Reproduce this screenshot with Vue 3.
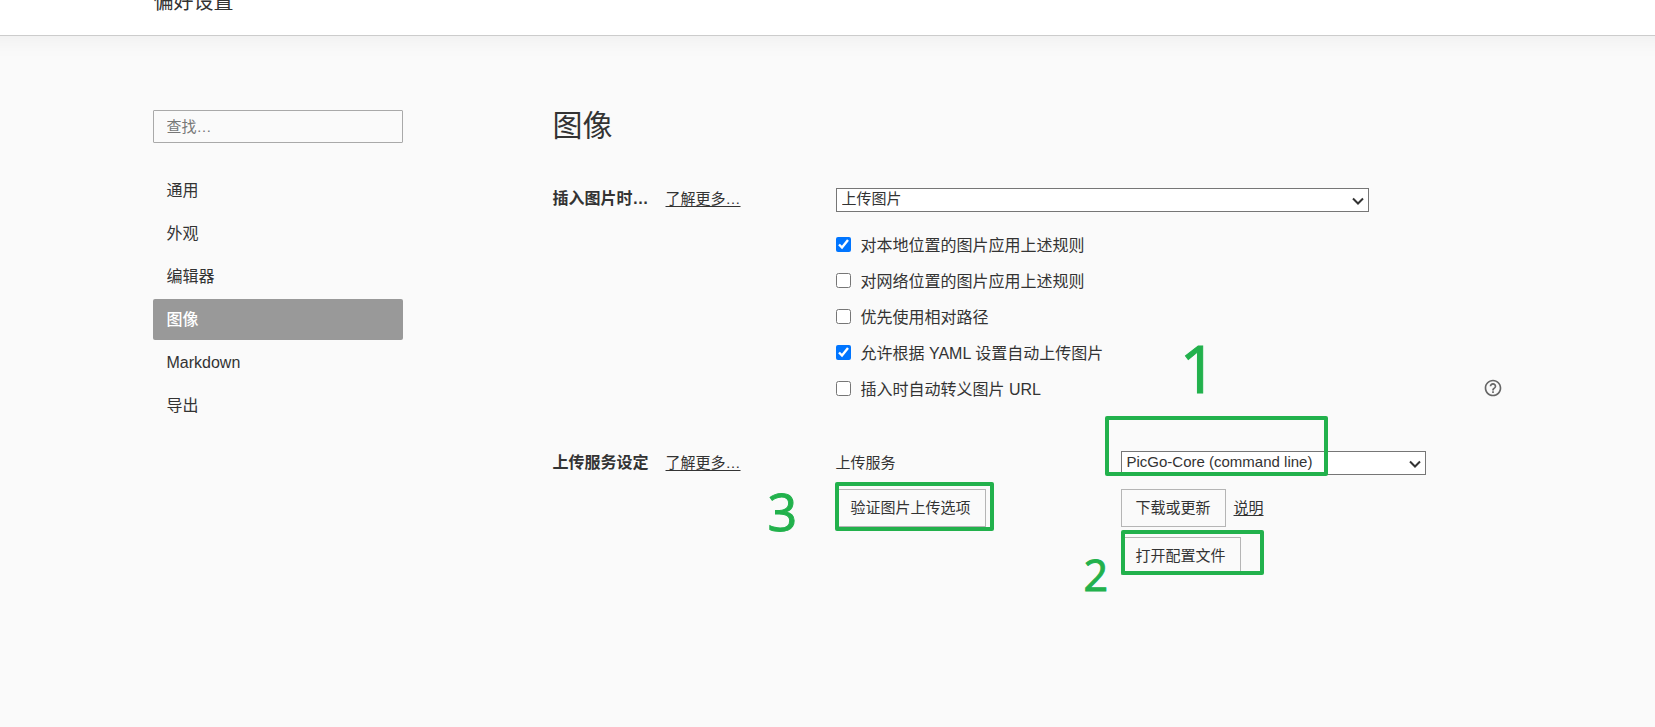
<script setup>
import { ref } from 'vue'

const query = ref('')
const navItems = ['通用', '外观', '编辑器', '图像', 'Markdown', '导出']
const active = ref('图像')
const insertAction = ref('upload')
const service = ref('picgo-core')
const rules = ref([
  { id: 'local', label: '对本地位置的图片应用上述规则', checked: true },
  { id: 'network', label: '对网络位置的图片应用上述规则', checked: false },
  { id: 'relative', label: '优先使用相对路径', checked: false },
  { id: 'yaml', label: '允许根据 YAML 设置自动上传图片', checked: true },
  { id: 'escape', label: '插入时自动转义图片 URL', checked: false, help: true },
])
</script>

<template>
  <div class="page">
    <header class="topbar">
      <div class="wrap title">偏好设置</div>
    </header>

    <div class="wrap body">
      <aside class="sidebar">
        <input v-model="query" class="search" type="search" placeholder="查找…" aria-label="查找" />
        <nav class="nav">
          <a
            v-for="item in navItems"
            :key="item"
            href="#"
            class="nav-item"
            :class="{ active: item === active }"
            @click.prevent="active = item"
          >{{ item }}</a>
        </nav>
      </aside>

      <main class="main">
        <h1>图像</h1>

        <section class="row">
          <div class="row-label">
            <label class="strong" for="insert-action">插入图片时…</label>
            <a class="link" href="#">了解更多…</a>
          </div>
          <div>
            <div class="select-box">
              <select id="insert-action" v-model="insertAction" class="select">
                <option value="upload">上传图片</option>
              </select>
              <svg class="chevron" viewBox="0 0 12 8" width="12" height="8" aria-hidden="true">
                <path d="M1 1.500l5 5 5-5" fill="none" stroke="#333" stroke-width="2" />
              </svg>
            </div>
            <ul class="rules">
              <li v-for="rule in rules" :key="rule.id" class="rule">
                <input :id="rule.id" v-model="rule.checked" type="checkbox" />
                <label :for="rule.id">{{ rule.label }}</label>
                <button v-if="rule.help" class="help" type="button" aria-label="帮助">
                  <svg viewBox="0 0 24 24" width="20" height="20" aria-hidden="true">
                    <path
                      fill="currentColor"
                      d="M11 18h2v-2h-2v2zm1-16C6.480 2 2 6.480 2 12s4.480 10 10 10 10-4.480 10-10S17.520 2 12 2zm0 18c-4.410 0-8-3.590-8-8s3.590-8 8-8 8 3.590 8 8-3.590 8-8 8zm0-14c-2.210 0-4 1.790-4 4h2c0-1.100.9-2 2-2s2 .9 2 2c0 2-3 1.750-3 5h2c0-2.250 3-2.500 3-5 0-2.210-1.790-4-4-4z"
                    />
                  </svg>
                </button>
              </li>
            </ul>
          </div>
        </section>

        <section class="row upload">
          <div class="row-label">
            <strong class="strong">上传服务设定</strong>
            <a class="link" href="#">了解更多…</a>
          </div>
          <div class="service">
            <div class="stack">
              <label class="small" for="service">上传服务</label>
              <button class="btn" type="button">验证图片上传选项</button>
            </div>
            <div class="stack">
              <div class="select-box">
                <select id="service" v-model="service" class="select">
                  <option value="picgo-core">PicGo-Core (command line)</option>
                </select>
                <svg class="chevron" viewBox="0 0 12 8" width="12" height="8" aria-hidden="true">
                  <path d="M1 1.500l5 5 5-5" fill="none" stroke="#333" stroke-width="2" />
                </svg>
              </div>
              <div class="actions">
                <button class="btn" type="button">下载或更新</button>
                <a class="link" href="#">说明</a>
              </div>
              <button class="btn" type="button">打开配置文件</button>
            </div>
          </div>
          <div class="mark box-service"></div>
          <div class="mark box-config"></div>
          <div class="mark box-verify"></div>
          <span class="digit digit-one">1</span>
          <span class="digit digit-two">2</span>
          <span class="digit digit-three">3</span>
        </section>
      </main>
    </div>
  </div>
</template>

<style>
body {
  margin: 0;
  background: #fafafa;
}
</style>

<style scoped>
.page {
  min-height: 100vh;
  box-sizing: border-box;
  background: #fafafa;
  color: #333;
  font: 16px/24px "Liberation Sans", "Noto Sans CJK SC", sans-serif;
  overflow: hidden;
}
.wrap {
  max-width: 1350px;
  margin: 0 auto;
}
.topbar {
  display: flow-root;
  height: 35px;
  margin: 0 -30px;
  background: #fff;
  border-bottom: 1px solid #ccc;
  box-shadow: 0 2px 24px rgba(0, 0, 0, 0.06);
}
.title {
  margin-top: -13px;
  font-size: 20px;
  line-height: 30px;
  text-indent: 1px;
}
.body {
  display: flex;
  gap: 150px;
  padding-top: 74px;
}
.sidebar {
  flex: 0 0 250px;
}
.search {
  display: block;
  width: 100%;
  height: 33px;
  box-sizing: border-box;
  padding: 0 13px;
  border: 1px solid #a9a9a9;
  border-radius: 1px;
  background: transparent;
  color: inherit;
  font: inherit;
  font-size: 15px;
  appearance: none;
}
.search::placeholder {
  color: #777;
}
.nav {
  display: flex;
  flex-direction: column;
  gap: 2px;
  margin-top: 27px;
}
.nav-item {
  padding: 0 14px;
  line-height: 41px;
  border-radius: 2px;
  color: inherit;
  text-decoration: none;
}
.nav-item.active {
  background: #999;
  color: #fff;
  font-weight: 500;
}
.main {
  flex: 1;
  min-width: 0;
}
h1 {
  margin: 0 0 46px;
  font-size: 30px;
  font-weight: 400;
  line-height: 32px;
}
.row {
  position: relative;
  display: grid;
  grid-template-columns: 283px 1fr;
}
.row-label {
  display: flex;
  align-items: baseline;
  gap: 17px;
  line-height: 22px;
}
.strong {
  font-weight: 700;
}
.link {
  color: inherit;
  font-size: 15px;
  text-underline-offset: 2px;
}
.select-box {
  position: relative;
  width: 80%;
}
.select {
  display: block;
  width: 100%;
  height: 24px;
  box-sizing: border-box;
  padding: 0 24px 2px 5px;
  border: 1px solid #767676;
  border-radius: 0;
  background-color: #fff;
  color: #333;
  font: inherit;
  font-size: 15px;
  line-height: 20px;
  appearance: none;
}
.chevron {
  position: absolute;
  right: 5px;
  top: 9px;
  pointer-events: none;
}
.rules {
  margin: 22px 0 0;
  padding: 0;
  list-style: none;
}
.rule {
  display: flex;
  align-items: flex-start;
  height: 36px;
}
.rule input {
  width: 15px;
  height: 15px;
  margin: 3px 10px 0 0;
}
.help {
  display: flex;
  margin-left: auto;
  padding: 0;
  border: 0;
  background: none;
  color: #666;
}
.upload {
  margin-top: 37px;
}
.upload .row-label {
  line-height: 24px;
}
.service {
  display: grid;
  grid-template-columns: 285px 1fr;
}
.stack {
  display: flex;
  flex-direction: column;
  align-items: flex-start;
  gap: 10px;
}
.stack > :first-child {
  margin-bottom: 4px;
}
.small {
  font-size: 15px;
}
.btn {
  height: 38px;
  padding: 0 14px;
  border: 1px solid #b5b5b5;
  background: #fafafa;
  color: inherit;
  font: inherit;
  font-size: 15px;
  white-space: nowrap;
}
.actions {
  display: flex;
  align-items: center;
  gap: 8px;
}
.mark {
  position: absolute;
  box-sizing: border-box;
  border: 4px solid #22b14c;
  border-radius: 2px;
  pointer-events: none;
}
.box-service {
  left: 552px;
  top: -35px;
  width: 223px;
  height: 60px;
}
.box-config {
  left: 568px;
  top: 79px;
  width: 143px;
  height: 45px;
}
.box-verify {
  left: 282px;
  top: 31px;
  width: 159px;
  height: 49px;
}
.digit {
  position: absolute;
  color: #22b14c;
  font-family: "Open Sans", "Noto Sans", sans-serif;
  line-height: 1;
  -webkit-text-stroke: 1px #22b14c;
}
.digit-one {
  left: 627px;
  top: -117px;
  font-size: 66px;
}
.digit-two {
  left: 531px;
  top: 102px;
  font-size: 43px;
}
.digit-three {
  left: 215px;
  top: 34px;
  font-size: 52px;
}
</style>
